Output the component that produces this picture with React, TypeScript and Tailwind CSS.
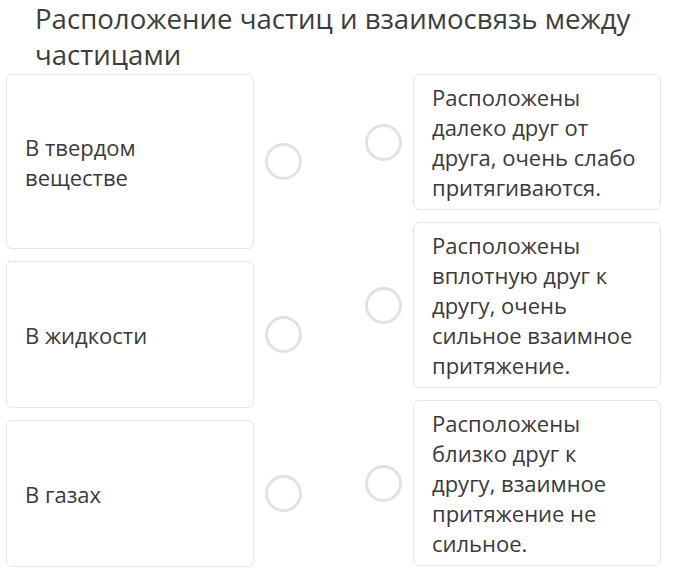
import React from 'react';

const leftItems = [
  { text: 'В твердом веществе', h: 'h-[175px]' },
  { text: 'В жидкости', h: 'h-[147px]' },
  { text: 'В газах', h: 'h-[147px]' },
];

const rightItems = [
  { text: 'Расположены далеко друг от друга, очень слабо притягиваются.', h: 'h-[136px]' },
  { text: 'Расположены вплотную друг к другу, очень сильное взаимное притяжение.', h: 'h-[166px]' },
  { text: 'Расположены близко друг к другу, взаимное притяжение не сильное.', h: 'h-[166px]' },
];

const Circle: React.FC = () => (
  <div className="w-[37px] h-[37px] shrink-0 rounded-full border-[3px] border-[#e1e2e4] bg-white" />
);

const App: React.FC = () => {
  return (
    <div
      className="w-[683px] h-[571px] bg-white overflow-hidden text-[#3a3a3a]"
      style={{ fontFamily: '"Open Sans", "Noto Sans", sans-serif' }}
    >
      <h1 className="h-[74px] pl-[35px] pr-4 text-[27.6px] leading-[36px] font-normal text-[#3d3d3d]">
        Расположение частиц и взаимосвязь между частицами
      </h1>

      <div className="flex pl-[6px] gap-[63px]">
        <div className="flex flex-col gap-[12px]">
          {leftItems.map((item) => (
            <div key={item.text} className="flex items-center gap-[11px]">
              <div
                className={`w-[248px] ${item.h} flex items-center rounded-md border border-[#e4e5e7] bg-white pl-[18px] pr-4 text-[22px] leading-[30px]`}
              >
                <span className="w-[130px]">{item.text}</span>
              </div>
              <Circle />
            </div>
          ))}
        </div>

        <div className="flex flex-col gap-[12px]">
          {rightItems.map((item) => (
            <div key={item.text} className="flex items-center gap-[11px]">
              <Circle />
              <div
                className={`w-[248px] ${item.h} flex items-center rounded-md border border-[#e4e5e7] bg-white pl-[18px] pr-[20px] text-[22px] leading-[30px]`}
              >
                <span>{item.text}</span>
              </div>
            </div>
          ))}
        </div>
      </div>
    </div>
  );
};

export default App;
